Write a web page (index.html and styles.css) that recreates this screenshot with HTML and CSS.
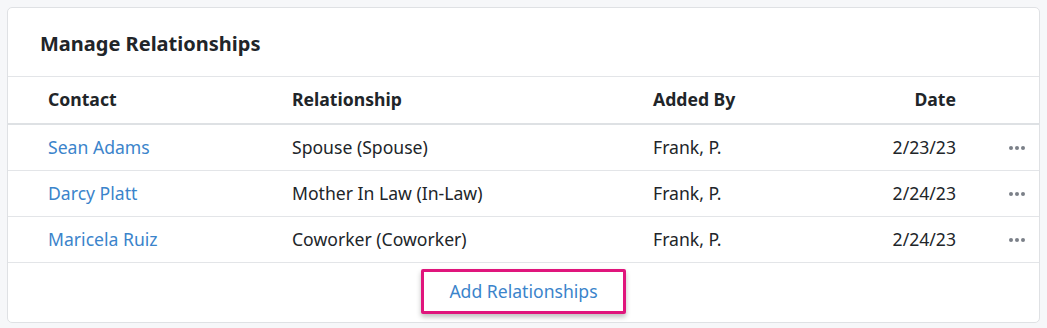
FILE: index.html
```html
<!DOCTYPE html>
<html lang="en">
<head>
<meta charset="utf-8">
<title>Manage Relationships</title>
<link rel="stylesheet" href="styles.css">
</head>
<body>
<section class="card">
  <header class="card-header">
    <h2 class="card-title">Manage Relationships</h2>
  </header>
  <div class="table">
    <div class="row head">
      <div class="cell">Contact</div>
      <div class="cell">Relationship</div>
      <div class="cell">Added By</div>
      <div class="cell right">Date</div>
      <div class="cell"></div>
    </div>
    <div class="row">
      <div class="cell"><a class="link" href="#">Sean Adams</a></div>
      <div class="cell">Spouse (Spouse)</div>
      <div class="cell">Frank, P.</div>
      <div class="cell right">2/23/23</div>
      <div class="cell more"><span class="dots"><i></i><i></i><i></i></span></div>
    </div>
    <div class="row">
      <div class="cell"><a class="link" href="#">Darcy Platt</a></div>
      <div class="cell">Mother In Law (In-Law)</div>
      <div class="cell">Frank, P.</div>
      <div class="cell right">2/24/23</div>
      <div class="cell more"><span class="dots"><i></i><i></i><i></i></span></div>
    </div>
    <div class="row">
      <div class="cell"><a class="link" href="#">Maricela Ruiz</a></div>
      <div class="cell">Coworker (Coworker)</div>
      <div class="cell">Frank, P.</div>
      <div class="cell right">2/24/23</div>
      <div class="cell more"><span class="dots"><i></i><i></i><i></i></span></div>
    </div>
  </div>
  <footer class="card-footer">
    <button class="add-btn" type="button">Add Relationships</button>
  </footer>
</section>
</body>
</html>
```

FILE: styles.css
```css
* { box-sizing: border-box; }

html, body {
  margin: 0;
  padding: 0;
  background: #f6f7f9;
}

body {
  padding: 7px 8px 0 7px;
  font-family: "Noto Sans", "Open Sans", sans-serif;
  font-size: 17.6px;
  color: #212529;
}

.card {
  background: #ffffff;
  border: 1px solid #dfe1e4;
  border-radius: 5px;
  width: 1033px;
  height: 316px;
  overflow: hidden;
}

.card-header {
  height: 69px;
  border-bottom: 1px solid #e3e5e8;
  display: flex;
  align-items: center;
  padding-left: 32px;
  padding-top: 2px;
}

.card-title {
  margin: 0;
  font-size: 20px;
  font-weight: 700;
  color: #212529;
}

.row {
  display: grid;
  grid-template-columns: 244px 361px 203px 100px 1fr;
  align-items: center;
  padding-left: 40px;
  padding-bottom: 2px;
  height: 46px;
  border-bottom: 1px solid #e3e5e8;
}

.row.head {
  height: 48px;
  border-bottom: 2px solid #dee1e4;
  font-weight: 700;
}

.cell.right { text-align: right; }

.cell.more {
  display: flex;
  justify-content: flex-end;
  padding-right: 14px;
  padding-top: 2px;
}

.link {
  color: #3b84cb;
  text-decoration: none;
}

.dots {
  display: flex;
  gap: 2px;
}

.dots i {
  display: block;
  width: 4px;
  height: 4px;
  border-radius: 50%;
  background: #7b8088;
}

.card-footer {
  display: flex;
  justify-content: center;
  padding-top: 6px;
}

.add-btn {
  width: 205px;
  height: 45px;
  background: #ffffff;
  border: 3px solid #e0157c;
  border-radius: 2px;
  color: #3b84cb;
  font-family: inherit;
  font-size: 17.6px;
  box-shadow: 0 3px 5px rgba(0, 0, 0, 0.25);
  padding: 0 0 2px;
}
```
